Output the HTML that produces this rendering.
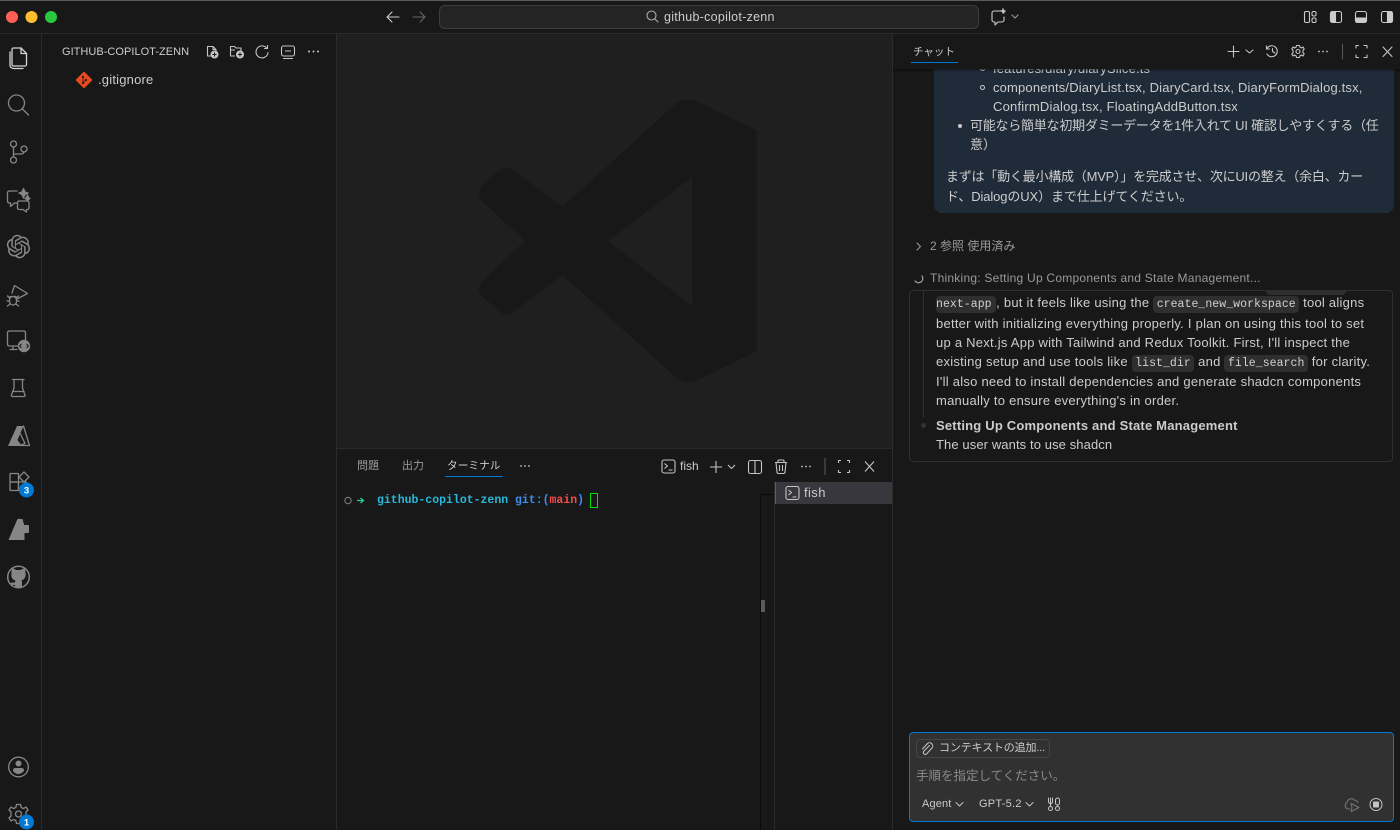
<!DOCTYPE html>
<html lang="ja"><head><meta charset="utf-8"><title>github-copilot-zenn</title>
<style>
html,body{margin:0;padding:0;background:#181818;width:1400px;height:830px;overflow:hidden}
body{font-family:"Liberation Sans","Noto Sans CJK JP",sans-serif;font-size:13px;color:#ccc;position:relative}
div{box-sizing:border-box}
.a{position:absolute}
.t{position:absolute;white-space:nowrap;line-height:20px;height:20px}
.b .t{letter-spacing:.25px}
code{font-family:"Liberation Mono",monospace;font-size:11.5px;background:#2f2f2f;border-radius:4px;padding:2px 3.5px;color:#d0d0d0;letter-spacing:.05px}
svg{position:absolute;left:0;top:0}
</style></head><body>
<div class="a" style="left:0;top:0;width:1400px;height:1px;background:#5c5c5c"></div>
<div class="a" style="left:0;top:33px;width:1400px;height:1px;background:#2b2b2b"></div>
<div class="a" style="left:41px;top:34px;width:1px;height:796px;background:#2b2b2b"></div>
<div class="a" style="left:336px;top:34px;width:1px;height:796px;background:#2b2b2b"></div>
<div class="a" style="left:337px;top:34px;width:555px;height:414px;background:#1f1f1f"></div>
<div class="a" style="left:337px;top:448px;width:555px;height:1px;background:#2b2b2b"></div>
<div class="a" style="left:892px;top:34px;width:1px;height:796px;background:#2b2b2b"></div>

<div class="a" style="left:439px;top:5px;width:540px;height:24px;background:#242424;border:1px solid #3c3c3c;border-radius:6px"></div>
<div class="t" style="left:664px;top:7px;font-size:12.5px;color:#ccc;letter-spacing:.27px">github-copilot-zenn</div>

<div class="t" style="left:62px;top:42px;font-size:11px;color:#ccc;letter-spacing:.03px">GITHUB-COPILOT-ZENN</div>
<div class="t" style="left:98px;top:70px;color:#ccc;letter-spacing:.2px">.gitignore</div>

<div class="t" style="left:357px;top:456px;font-size:11px;color:#9d9d9d">問題</div>
<div class="t" style="left:402px;top:456px;font-size:11px;color:#9d9d9d">出力</div>
<div class="t" style="left:447px;top:456px;font-size:10.7px;color:#ccc">ターミナル</div>
<div class="a" style="left:445px;top:476px;width:58px;height:1px;background:#0078d4"></div>
<div class="t" style="left:680px;top:456px;font-size:12px;color:#ccc">fish</div>

<div class="t" style="left:377px;top:491px;font:bold 11.5px/20px 'Liberation Mono',monospace;color:#29b8db">github-copilot-zenn</div>
<div class="t" style="left:515px;top:491px;font:bold 11.5px/20px 'Liberation Mono',monospace;color:#3b8eea">git:(<span style="color:#f14c4c">main</span>)</div>
<div class="a" style="left:590px;top:493px;width:8px;height:15px;border:1px solid #00e000"></div>

<div class="a" style="left:760px;top:494px;width:14px;height:336px;border-left:1px solid #0a0a0a;border-top:1px solid #0a0a0a"></div>
<div class="a" style="left:761px;top:600px;width:4px;height:12px;background:#5a5a5a"></div>
<div class="a" style="left:774px;top:482px;width:1px;height:348px;background:#2b2b2b"></div>
<div class="a" style="left:775px;top:482px;width:117px;height:22px;background:#37373d;border-left:1px solid #0078d4"></div>
<div class="t" style="left:804px;top:483px;color:#ccc;letter-spacing:.4px">fish</div>

<!-- chat content -->
<div class="a" style="left:934px;top:40px;width:460px;height:173px;background:#1f2b38;border-radius:0 0 8px 8px"></div>
<div class="t" style="left:993px;top:59px;letter-spacing:.17px">features/diary/diarySlice.ts</div>
<div class="t" style="left:993px;top:78px;letter-spacing:.16px">components/DiaryList.tsx, DiaryCard.tsx, DiaryFormDialog.tsx,</div>
<div class="t" style="left:993px;top:97px;letter-spacing:.2px">ConfirmDialog.tsx, FloatingAddButton.tsx</div>
<div class="t" style="left:970px;top:116px;letter-spacing:-.24px">可能なら簡単な初期ダミーデータを1件入れて UI 確認しやすくする（任</div>
<div class="t" style="left:970px;top:135px">意）</div>
<div class="t" style="left:946px;top:167px;letter-spacing:-.22px">まずは「動く最小構成（MVP）」を完成させ、次にUIの整え（余白、カー</div>
<div class="t" style="left:946px;top:187px;letter-spacing:-.12px">ド、DialogのUX）まで仕上げてください。</div>
<div class="a" style="left:980px;top:85px;width:5px;height:5px;border:1px solid #ccc;border-radius:50%"></div>
<div class="a" style="left:980px;top:66px;width:5px;height:5px;border:1px solid #ccc;border-radius:50%"></div>
<div class="a" style="left:958px;top:124px;width:4px;height:4px;background:#ccc;border-radius:50%"></div>

<div class="a" style="left:893px;top:34px;width:507px;height:35px;background:#181818"></div>
<div class="a" style="left:893px;top:69px;width:507px;height:3px;background:linear-gradient(#0006,#0000)"></div>
<div class="t" style="left:913px;top:42px;font-size:10.5px;color:#ccc">チャット</div>
<div class="a" style="left:911px;top:62px;width:47px;height:1px;background:#0078d4"></div>

<div class="t" style="left:930px;top:236px;font-size:12px;color:#999">2 参照 使用済み</div>
<div class="t" style="left:930px;top:268px;font-size:12px;color:#999;letter-spacing:.24px">Thinking: Setting Up Components and State Management...</div>

<div class="a b" style="left:909px;top:290px;width:484px;height:172px;border:1px solid #2f2f2f;border-radius:4px;overflow:hidden">
 <div class="a" style="left:356px;top:-14px;width:80px;height:18px;background:#2f2f2f;border-radius:4px"></div>
 <div class="a" style="left:13px;top:0;width:1px;height:127px;background:#2f2f2f"></div>
 <div class="a" style="left:11px;top:132px;width:5px;height:5px;background:#333;border-radius:50%"></div>
 <div class="t" style="left:26px;top:2px"><code style="padding:2px 4.5px 2px 0">next-app</code>, but it feels like using the <code>create_new_workspace</code> tool aligns</div>
 <div class="t" style="left:26px;top:23px">better with initializing everything properly. I plan on using this tool to set</div>
 <div class="t" style="left:26px;top:42px">up a Next.js App with Tailwind and Redux Toolkit. First, I'll inspect the</div>
 <div class="t" style="left:26px;top:61px">existing setup and use tools like <code>list_dir</code> and <code>file_search</code> for clarity.</div>
 <div class="t" style="left:26px;top:81px">I'll also need to install dependencies and generate shadcn components</div>
 <div class="t" style="left:26px;top:100px">manually to ensure everything's in order.</div>
 <div class="t" style="left:26px;top:125px;font-weight:bold;letter-spacing:.2px">Setting Up Components and State Management</div>
 <div class="t" style="left:26px;top:144px;letter-spacing:.1px">The user wants to use shadcn</div>
</div>

<div class="a" style="left:909px;top:732px;width:485px;height:90px;background:#313131;border:1px solid #0078d4;border-radius:4px"></div>
<div class="a" style="left:916px;top:739px;width:134px;height:19px;border:1px solid #454545;border-radius:4px"></div>
<div class="t" style="left:939px;top:738px;font-size:11px;color:#ccc;letter-spacing:-.15px">コンテキストの追加...</div>
<div class="t" style="left:916px;top:766px;font-size:12.5px;color:#8a8a8a">手順を指定してください。</div>
<div class="t" style="left:922px;top:794px;font-size:11px;color:#ccc;letter-spacing:.15px">Agent</div>
<div class="t" style="left:979px;top:794px;font-size:11px;color:#ccc;letter-spacing:.25px">GPT-5.2</div>

<svg width="1400" height="830" viewBox="0 0 1400 830" fill="none">
<!-- traffic -->
<circle cx="12" cy="17" r="6" fill="#ff5f57"/><circle cx="31.5" cy="17" r="6" fill="#febc2e"/><circle cx="51" cy="17" r="6" fill="#28c840"/>
<!-- watermark -->
<path fill="#181818" fill-rule="evenodd" d="M676.7 103Q686 96 698 101.7L756.7 130.7V351L698 380Q686 386 676.7 378L562.7 275L513.3 311.7Q506.7 317 500 311.7L482.7 296.7Q475 288.3 482.7 280.7L525 241L482.7 201.7Q475 193.3 482.7 185L500 170Q506.7 165 513.3 170L562.7 206.7ZM692.3 176.7V306L607.7 241Z"/>
<!-- title icons -->
<g stroke="#ccc" stroke-width="1.1" stroke-linecap="round" stroke-linejoin="round">
<path d="M387 17H399M387 17L392 12M387 17L392 22"/>
<path d="M413 17H425M425 17L420 12M425 17L420 22" stroke="#666"/>
<circle cx="651.5" cy="15.5" r="4.5" stroke="#aaa"/><path d="M655 19L658 22" stroke="#aaa"/>
<path d="M1004 13V11H994A2 2 0 0 0 992 13V20A2 2 0 0 0 994 22H995V25L998 22H1002A2 2 0 0 0 1004 20V17"/>
<path d="M1003 9V13M1001 11H1005" stroke-width="1.4"/>
<path d="M1012 15L1015 18L1018 15" stroke="#999"/>
</g>
<g stroke="#ccc" stroke-width="1.1">
<rect x="1304.5" y="11.5" width="5" height="11" rx="1.5"/><rect x="1312" y="11.5" width="4" height="4.5" rx="1.5"/><rect x="1312" y="18" width="4" height="4.5" rx="1.5"/>
<rect x="1330.5" y="11.5" width="11" height="11" rx="2"/><path d="M1330.5 13.5a2 2 0 0 1 2-2h3v11h-3a2 2 0 0 1-2-2z" fill="#ccc"/>
<rect x="1355.5" y="11.5" width="11" height="11" rx="2"/><path d="M1355.5 18h11v2.5a2 2 0 0 1-2 2h-7a2 2 0 0 1-2-2z" fill="#ccc"/>
<rect x="1381.5" y="11.5" width="11" height="11" rx="2"/><path d="M1387.5 11.5h3a2 2 0 0 1 2 2v7a2 2 0 0 1-2 2h-3z" fill="#ccc"/>
</g>
<!-- activity bar -->
<g stroke="#d4d4d4" stroke-width="1.3" stroke-linejoin="round" stroke-linecap="round">
<path d="M13.5 48H21L26.5 53.5V64.5A1.5 1.5 0 0 1 25 66H13.5A1.5 1.5 0 0 1 12 64.5V49.5A1.5 1.5 0 0 1 13.5 48Z"/>
<path d="M21 48V53.5H26.5"/><path d="M10 52V65A3.5 3.5 0 0 0 13.5 68.500H23"/>
</g>
<g stroke="#868686" stroke-width="1.3" stroke-linejoin="round" stroke-linecap="round">
<circle cx="16.5" cy="103" r="8"/><path d="M22.5 109L28.5 115"/>
<circle cx="13.5" cy="144" r="3"/><circle cx="13.5" cy="160" r="3"/><circle cx="24" cy="149" r="3"/>
<path d="M13.5 147V157M24 152Q24 154 20 154H13.5"/>
<path d="M17 191H9A2 2 0 0 0 7.5 193V201A2 2 0 0 0 9 203H10.5V206.5L14.5 203H16.5"/>
<path d="M19 201H27.5A1.5 1.5 0 0 1 29 202.5V208A1.5 1.5 0 0 1 27.5 209.5H26.5V212L23 209.5H19A1.5 1.5 0 0 1 17.5 208V202.5A1.5 1.5 0 0 1 19 201Z"/>
<path d="M23.5 188.5L25 192L28 193L25 194.5L23.5 198L22 194.5L19 193L22 192Z" fill="#868686"/>
<path d="M27.5 195L28.5 197.5L30 198.5L28.5 199.5L27.5 201L26.5 199.5L25 198.5L26.5 197.5Z" fill="#868686"/>
<path d="M12 293L14.5 285.5L27.5 293.5L17 299"/>
<rect x="9.5" y="296.5" width="7" height="8.5" rx="3.5"/><path d="M7.5 296L10 298.5M18.5 296L16 298.5M7 301H9.5M19 301H16.5M7.5 306L10 304M18.5 306L16 304M10 296.5H16"/>
<path d="M9 331H24A2 2 0 0 1 25.5 333V340M18 346H9A2 2 0 0 1 7.5 344V333A2 2 0 0 1 9 331M13 346V349M10 349.5H17"/>
<path d="M12.5 379.5H24M14 380V388L11.5 395A1 1 0 0 0 12.5 396.5H24A1 1 0 0 0 25 395L22.5 388V380"/><path d="M12.5 391.5H24"/>
<rect x="10" y="473.500" width="8.500" height="8.500" rx=".5"/><rect x="10" y="482" width="8.500" height="8.500" rx=".5"/><rect x="18.500" y="482" width="8" height="8.500" rx=".5"/><path d="M24 472L29 477L24 482L19 477Z"/>
<circle cx="18.500" cy="577" r="10.800" stroke-width="1.500"/>
<circle cx="18.500" cy="767" r="9.800"/>
<g transform="translate(18.500 814)"><circle r="3"/><path d="M-2-9.500H2L2.700-6.500L5-5.500L7.500-7L9.500-4L7.500-2V2L9.500 4L7.500 7L5 5.500L2.700 6.500L2 9.500H-2L-2.700 6.500L-5 5.500L-7.500 7L-9.500 4L-7.500 2V-2L-9.500-4L-7.500-7L-5-5.500L-2.700-6.500Z"/></g>
<path d="M23.500 426L29.500 445.500H19.500L25 443.500L19 431"/>
</g>
<g transform="translate(6.7 234.800) scale(.98)" fill="#868686"><path d="M22.2819 9.8211a5.9847 5.9847 0 0 0-.5157-4.9108 6.0462 6.0462 0 0 0-6.5098-2.9A6.0651 6.0651 0 0 0 4.9807 4.1818a5.9847 5.9847 0 0 0-3.9977 2.9 6.0462 6.0462 0 0 0 .7427 7.0966 5.98 5.98 0 0 0 .511 4.9107 6.051 6.051 0 0 0 6.5146 2.9001A5.9847 5.9847 0 0 0 13.2599 24a6.0557 6.0557 0 0 0 5.7718-4.2058 5.9894 5.9894 0 0 0 3.9977-2.9001 6.0557 6.0557 0 0 0-.7475-7.0729zm-9.022 12.6081a4.4755 4.4755 0 0 1-2.8764-1.0408l.1419-.0804 4.7783-2.7582a.7948.7948 0 0 0 .3927-.6813v-6.7369l2.02 1.1686a.071.071 0 0 1 .038.052v5.5826a4.504 4.504 0 0 1-4.4945 4.4944zm-9.6607-4.1254a4.4708 4.4708 0 0 1-.5346-3.0137l.142.0852 4.783 2.7582a.7712.7712 0 0 0 .7806 0l5.8428-3.3685v2.3324a.0804.0804 0 0 1-.0332.0615L9.74 19.9502a4.4992 4.4992 0 0 1-6.1408-1.6464zM2.3408 7.8956a4.485 4.485 0 0 1 2.3655-1.9728V11.6a.7664.7664 0 0 0 .3879.6765l5.8144 3.3543-2.0201 1.1685a.0757.0757 0 0 1-.071 0l-4.8303-2.7865A4.504 4.504 0 0 1 2.3408 7.872zm16.5963 3.8558L13.1038 8.364 15.1192 7.2a.0757.0757 0 0 1 .071 0l4.8303 2.7913a4.4944 4.4944 0 0 1-.6765 8.1042v-5.6772a.79.79 0 0 0-.407-.667zm2.0107-3.0231l-.142-.0852-4.7735-2.7818a.7759.7759 0 0 0-.7854 0L9.409 9.2297V6.8974a.0662.0662 0 0 1 .0284-.0615l4.8303-2.7866a4.4992 4.4992 0 0 1 6.6802 4.66zM8.3065 12.863l-2.02-1.1638a.0804.0804 0 0 1-.038-.0567V6.0742a4.4992 4.4992 0 0 1 7.3757-3.4537l-.142.0805L8.704 5.459a.7948.7948 0 0 0-.3927.6813zm1.0976-2.3654l2.602-1.4998 2.6069 1.4998v2.9994l-2.5974 1.4997-2.6067-1.4997Z"/></g>
<g fill="#868686">
<circle cx="24" cy="346" r="6.200"/>
<path d="M17 426H23.500L17.500 440L22 446H8Z"/>
<path d="M8.500 540L17 520Q18 518 20 519H22.500L24.500 526V540Z"/><rect x="23" y="525" width="6" height="8" rx="1"/>
<path d="M11.500 573C11.500 570 12 569 12.500 568.500C14 568.500 15 569 16 570H21C22 569 23 568.500 24.500 568.500C25 569 25.500 570 25.500 573C26 574 26 579 21.500 580.500C22 581 22 582 22 583V587.500H15V585C13 585.500 11.500 585 10.500 583L12 582.500L15 582.500C15 581.500 15 581 15.500 580.500C11 579.500 11 575 11.500 573Z"/>
<circle cx="18.500" cy="763.500" r="3"/><path d="M13 770.500Q13 768 15.500 768H21.500Q24 768 24 770.500V771Q21 774 18.500 774Q15.500 774 13 771Z"/>
</g>
<path d="M21.500 344L19.500 346L21.500 348M26.500 344L28.500 346L26.500 348" stroke="#181818" stroke-width="1"/>
<circle cx="26.500" cy="490" r="7.500" fill="#0078d4"/><circle cx="26.500" cy="822" r="7.500" fill="#0078d4"/>
<!-- explorer toolbar -->
<g stroke="#c5c5c5" stroke-width="1.100" stroke-linejoin="round">
<path d="M211 56H207.500V46.500H213L216 49.500V51M213 46.500V49.500H216"/>
<path d="M235 56H230.500V46.500H234.500L236 48H241V51M230.500 50H235"/>
<path d="M267 48.500A6 6 0 1 0 268 52.500M267.500 45.500V48.500H264.500" stroke-linecap="round"/>
<rect x="281.500" y="46" width="13" height="10" rx="2"/><path d="M285 51H291M283 58.500H293"/>
</g>
<circle cx="214.500" cy="54.500" r="4" fill="#c5c5c5"/><path d="M212.500 54.500H216.500M214.500 52.500V56.500" stroke="#181818"/>
<circle cx="240" cy="54.500" r="4" fill="#c5c5c5"/><path d="M238 54.500H242M240 52.500V56.500" stroke="#181818"/>
<g fill="#c5c5c5"><circle cx="309" cy="51.500" r="1"/><circle cx="313.500" cy="51.500" r="1"/><circle cx="318" cy="51.500" r="1"/></g>
<!-- git icon -->
<path d="M84 72.500L91.500 80L84 87.500L76.500 80Z" fill="#e8491d" stroke="#e8491d" stroke-width="1.500" stroke-linejoin="round"/>
<circle cx="83" cy="77" r="1.100" fill="#181818"/><circle cx="86" cy="80" r="1.100" fill="#181818"/><circle cx="83" cy="83" r="1.100" fill="#181818"/><path d="M83 77V83L86 80" stroke="#181818" stroke-width=".7"/>
<!-- terminal -->
<g fill="#c5c5c5"><circle cx="521" cy="466" r=".9"/><circle cx="525" cy="466" r=".9"/><circle cx="529" cy="466" r=".9"/><circle cx="802" cy="466.500" r=".9"/><circle cx="806" cy="466.500" r=".9"/><circle cx="810" cy="466.500" r=".9"/></g>
<g stroke="#c5c5c5" stroke-width="1.100" stroke-linejoin="round">
<rect x="662" y="460" width="13" height="13" rx="2"/><path d="M664.500 463.500L667.500 466L664.500 468.500M668.500 470H672.500"/><path d="M716 461V473M710 467H722"/><path d="M728 465L731.500 468.500L735 465"/>
<rect x="748.500" y="460.500" width="13" height="13" rx="2"/><path d="M755 460.500V473.500"/>
<path d="M775 462.500H787M778 462.500V461Q778 460 779 460H783Q784 460 784 461V462.500M776 462.500L777 472Q777 473.500 778.500 473.500H783.500Q785 473.500 785 472L786 462.500M779.500 465V471M782.500 465V471"/>
<path d="M825 458V475" stroke="#555"/>
<path d="M838.500 463V460.500H841M847 460.500H849.500V463M849.500 470V472.500H847M841 472.500H838.500V470"/>
<path d="M865 461.500L874 471.500M874 461.500L865 471.500"/>
<rect x="786" y="486.500" width="13" height="13" rx="2"/><path d="M788.500 490L791.500 492.500L788.500 495M792.500 497H796.500"/>
</g>
<circle cx="348" cy="500.500" r="3.200" stroke="#777" stroke-width="1.100"/>
<path d="M357 500.500H363M360.500 498L363.500 500.500L360.500 503" stroke="#23d18b" stroke-width="1.300"/>
<!-- chat toolbar -->
<g stroke="#c5c5c5" stroke-width="1.100" stroke-linejoin="round" stroke-linecap="round">
<path d="M1233.500 46V57M1228 51.500H1239"/><path d="M1246 50L1249.500 53L1253 50"/>
<path d="M1267 48.500A5.500 5.500 0 1 1 1267 54M1266.500 46V49H1269.500M1272.500 48.500V51.500L1275 53"/>
<g transform="translate(1298 51.500)"><circle r="2"/><path d="M-1.500-6H1.500L2-4.200L3.500-3.500L5-4.500L6.200-2.500L5-1.200V1.200L6.200 2.500L5 4.500L3.500 3.500L2 4.200L1.500 6H-1.500L-2 4.200L-3.500 3.500L-5 4.500L-6.200 2.500L-5 1.200V-1.200L-6.200-2.500L-5-4.500L-3.500-3.500L-2-4.200Z"/></g>
<path d="M1342.500 44V59" stroke="#555"/>
<path d="M1356 48V45.500H1358.500M1364 45.500H1367V48M1367 55V57.500H1364M1358.500 57.500H1356V55"/>
<path d="M1383 47L1392 56.500M1392 47L1383 56.500"/>
<path d="M917 243L920.500 246.500L917 250" stroke="#999"/>
<path d="M922 276A4 4 0 0 1 915 281" stroke="#aaa"/>
</g>
<g fill="#c5c5c5"><circle cx="1319" cy="51.500" r=".9"/><circle cx="1323" cy="51.500" r=".9"/><circle cx="1327" cy="51.500" r=".9"/></g>
<!-- input icons -->
<g stroke="#c5c5c5" stroke-width="1" stroke-linecap="round" stroke-linejoin="round">
<path d="M929.500 745.500L923.500 751.500A2 2 0 0 0 926.500 754L932 748A3.200 3.200 0 0 0 927.500 743.500L922.500 749"/>
<path d="M956 802.500L959.500 806L963 802.500M1026 802.500L1029.500 806L1033 802.500"/>
<path d="M1048.500 798V801.500Q1048.500 803.500 1050.500 803.500Q1052.500 803.500 1052.500 801.500V798M1050.500 798V806.500"/>
<rect x="1055.500" y="798" width="4" height="7" rx="2"/><path d="M1057.500 805V806.500"/><circle cx="1057.500" cy="808.500" r="2"/><circle cx="1050.500" cy="808.500" r="2"/>
<circle cx="1376" cy="804.500" r="6"/>
</g>
<rect x="1373" y="801.500" width="6" height="6" rx="1" fill="#c5c5c5"/>
<path d="M1350 809H1348A3.500 3.500 0 0 1 1347 802.500A4.500 4.500 0 0 1 1355 800.500A3 3 0 0 1 1358 803M1351 803.500L1359 807.500L1351 811.500L1352 807.500Z" stroke="#777" stroke-width="1" stroke-linejoin="round"/>
<text x="26.500" y="493.500" text-anchor="middle" font-family="Liberation Sans" font-size="9.500" font-weight="bold" fill="#fff">3</text>
<text x="26.500" y="825.500" text-anchor="middle" font-family="Liberation Sans" font-size="9.500" font-weight="bold" fill="#fff">1</text>
</svg>
</body></html>
